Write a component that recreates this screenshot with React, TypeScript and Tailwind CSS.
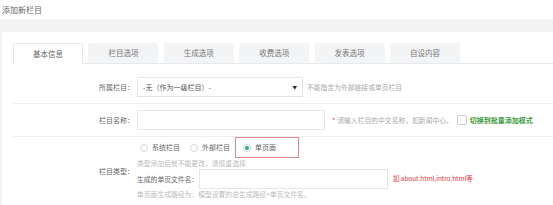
const font = { fontFamily: '"Noto Sans CJK SC", "Liberation Sans", sans-serif' };

const tabs = ['基本信息', '栏目选项', '生成选项', '收费选项', '发表选项', '自设内容'];

const Radio = ({ checked }: { checked?: boolean }) => (
  <span className="flex h-[8px] w-[8px] items-center justify-center rounded-full border border-[#d5d5d5] bg-white">
    {checked && <span className="h-[4px] w-[4px] rounded-full bg-[#1ab394]" />}
  </span>
);

const App = () => {
  return (
    <div className="h-[205px] w-[553px] overflow-hidden bg-white text-[#666]" style={font}>
      <div className="flex h-[19px] items-center pl-[2px] text-[8px] text-[#666]">添加新栏目</div>
      <div className="bg-[#f3f3f4] pl-[2px] pt-[13px]">
        <div className="h-[200px] bg-white pl-[11px] pt-[11px]">
          <div className="flex h-[21px] gap-[5.4px] border-b border-[#e7eaec]">
            {tabs.map((t, i) => (
              <div
                key={t}
                className={
                  i === 0
                    ? '-mb-px flex h-[21px] w-[70px] items-center justify-center rounded-t-[2px] border border-b-0 border-[#e7eaec] bg-white text-[7.5px] text-[#666]'
                    : 'flex h-[20px] w-[70px] items-center justify-center rounded-t-[2px] bg-[#f3f4f5] text-[7.5px] text-[#777]'
                }
              >
                {t}
              </div>
            ))}
          </div>

          <div className="flex items-center border-b border-[#eeeeee] pb-[6px] pt-[13px]">
            <div className="w-[121px] text-right text-[7px] text-[#666]">所属栏目：</div>
            <div className="ml-[3px] flex h-[20px] w-[166px] items-center justify-between border border-[#e5e6e7] pl-[5px] pr-[5px] text-[7px] text-[#555]">
              <span>-无（作为一级栏目）-</span>
              <span className="text-[4.5px] text-[#222]">▼</span>
            </div>
            <div className="ml-[4px] text-[6.8px] text-[#aaa]">不能指定为外部链接或单页栏目</div>
          </div>

          <div className="flex items-center border-b border-[#eeeeee] py-[6px]">
            <div className="w-[121px] text-right text-[7px] text-[#666]">栏目名称：</div>
            <div className="ml-[3px] h-[20px] w-[188px] border border-[#e5e6e7]" />
            <span className="ml-[7px] text-[7px] text-[#e4393c]">*</span>
            <span className="ml-[2px] text-[6.8px] text-[#aaa]">请输入栏目的中文名称，如新闻中心。</span>
            <span className="ml-[4px] h-[10px] w-[10px] rounded-[2px] border border-[#ccc]" />
            <span className="ml-[3px] text-[7px] font-bold text-[#3c9a3c]">切换到批量添加模式</span>
          </div>

          <div className="flex items-center">
            <div className="w-[121px] text-right text-[7px] text-[#666]">栏目类型：</div>
            <div className="ml-[3px] flex flex-col pb-[6px]">
              <div className="flex h-[21px] items-center text-[7px] text-[#666]">
                <span className="ml-[3px]"><Radio /></span>
                <span className="ml-[4px]">系统栏目</span>
                <span className="ml-[10px]"><Radio /></span>
                <span className="ml-[4px]">外部栏目</span>
                <div className="ml-[5px] flex h-[21px] w-[64px] items-center border border-[#e08a8a] pl-[7px]">
                  <Radio checked />
                  <span className="ml-[4px]">单页面</span>
                </div>
              </div>
              <div className="flex h-[11px] items-center text-[6.8px] text-[#bbb]">类型添加后就不能更改，请慎重选择</div>
              <div className="flex h-[20px] items-center">
                <span className="w-[62px] shrink-0 whitespace-nowrap text-[6.8px] text-[#666]">生成的单页文件名：</span>
                <span className="h-[20px] w-[189px] shrink-0 border border-[#e5e6e7]" />
                <span className="ml-[5px] whitespace-nowrap text-[6.4px] text-[#e4393c]">如 about.html,intro.html等</span>
              </div>
              <div className="flex h-[11px] items-center whitespace-nowrap text-[6.8px] text-[#bbb]">单页面生成路径为：模型设置的总生成路径+单页文件名。</div>
            </div>
          </div>
        </div>
      </div>
    </div>
  );
};

export default App;
